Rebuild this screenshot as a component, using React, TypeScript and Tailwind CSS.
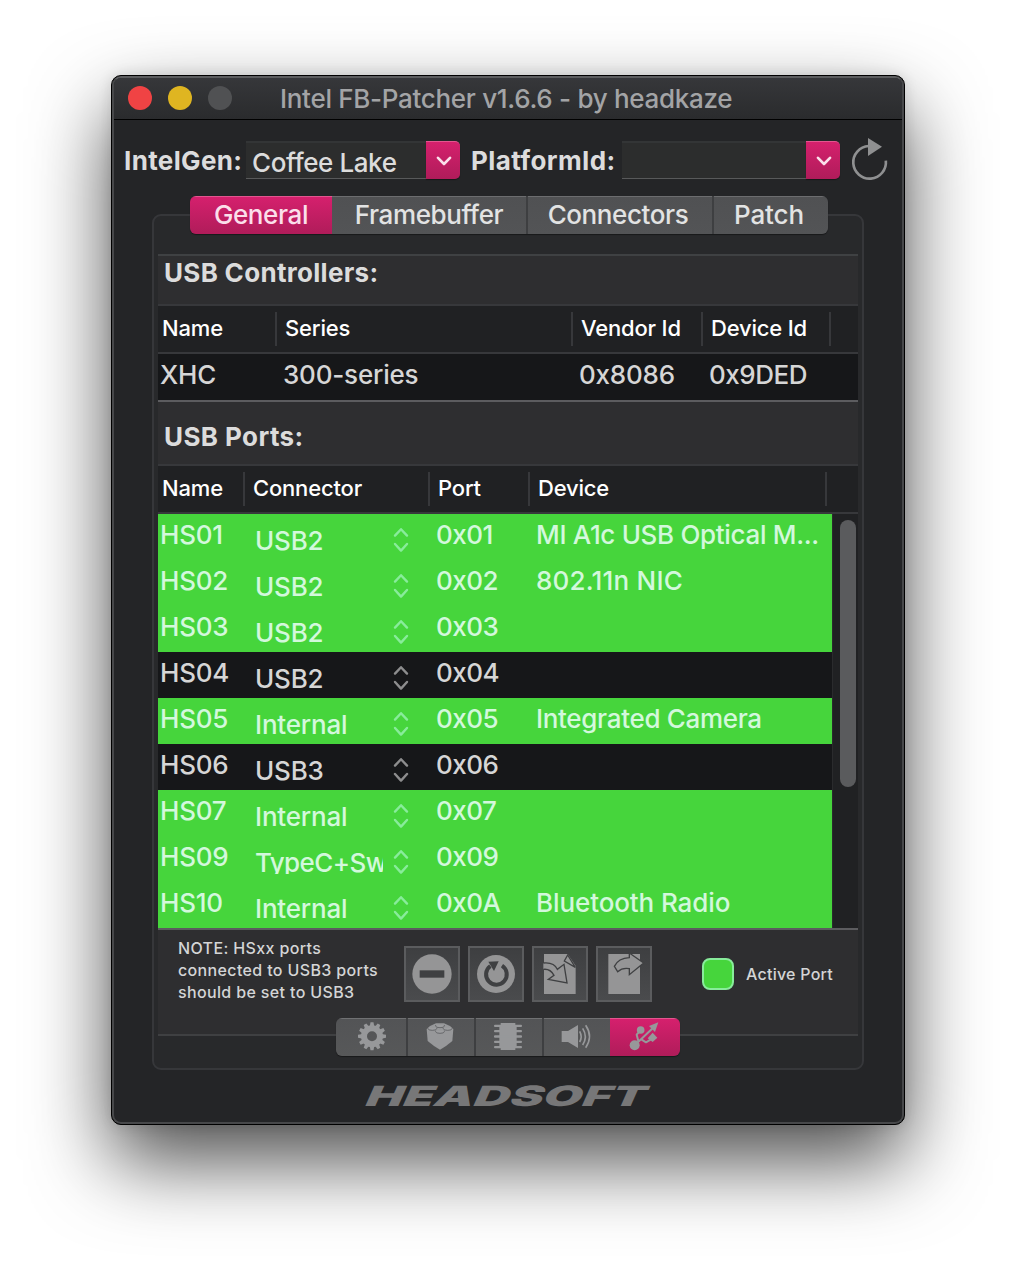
import type { ReactNode } from "react";

const controllers = [{ name: "XHC", series: "300-series", vendor: "0x8086", device: "0x9DED" }];

const ports = [
  { name: "HS01", connector: "USB2", port: "0x01", device: "MI A1c USB Optical M...", active: true },
  { name: "HS02", connector: "USB2", port: "0x02", device: "802.11n NIC", active: true },
  { name: "HS03", connector: "USB2", port: "0x03", device: "", active: true },
  { name: "HS04", connector: "USB2", port: "0x04", device: "", active: false },
  { name: "HS05", connector: "Internal", port: "0x05", device: "Integrated Camera", active: true },
  { name: "HS06", connector: "USB3", port: "0x06", device: "", active: false },
  { name: "HS07", connector: "Internal", port: "0x07", device: "", active: true },
  { name: "HS09", connector: "TypeC+Sw", port: "0x09", device: "", active: true, clipped: true },
  { name: "HS10", connector: "Internal", port: "0x0A", device: "Bluetooth Radio", active: true },
];

function Combo({ value, width }: { value: string; width: string }) {
  return (
    <div className="flex h-[38px]">
      <div
        className={`${width} border-t-2 border-b border-t-[#333536] border-b-[#58595a] bg-[#2c2d2d] pl-1.5 text-[26px] leading-[39px] font-[450] tracking-[-0.4px] text-[#dcdcdc]`}
      >
        {value}
      </div>
      <button className="flex w-[34px] items-center justify-center rounded-r-[5px] border-t border-[#e2568f] bg-gradient-to-b from-[#d5206d] to-[#b01c5a] shadow-[0_1px_1px_rgba(0,0,0,0.4)]">
        <svg width="16" height="10" viewBox="0 0 16 10" fill="none" stroke="#fbdfea" strokeWidth="2.6" strokeLinecap="round" strokeLinejoin="round" className="ml-px">
          <path d="M2 1.8 8 8 14 1.8" />
        </svg>
      </button>
    </div>
  );
}

function HeadCell({ width, children }: { width: string; children?: ReactNode }) {
  return (
    <div className={`flex h-[46px] items-start text-[22px] leading-[44px] font-medium tracking-[-0.18px] text-white ${width}`}>
      <span className="flex-1 whitespace-nowrap">{children}</span>
      <span className="mt-1.5 h-[34px] w-0.5 bg-[#37383b]" />
    </div>
  );
}

function Gear() {
  const teeth = Array.from({ length: 12 }, (_, i) => i * 30);
  return (
    <svg width="40" height="40" viewBox="63 23 120 120">
      <g fill="#97989a">
        {teeth.map((a) => (
          <path key={a} d="M119 50 121.5 36h9L133 50Z" transform={`rotate(${a} 126 78)`} />
        ))}
      </g>
      <circle cx="126" cy="78" r="24" fill="none" stroke="#97989a" strokeWidth="18" />
    </svg>
  );
}

function Brick() {
  return (
    <svg width="40" height="40" viewBox="273 23 120 120">
      <path d="M290 56 300 47 318 39 342 39 360 47 370 56 367 92Q350 107 330 118 310 107 293 92Z" fill="#97989a" />
      <g fill="#9c9d9f" stroke="#5d5e60" strokeWidth="2.5">
        <path d="M317 44v3a13 5 0 0 0 26 0v-3" />
        <path d="M294 52v3a13 5 0 0 0 26 0v-3" />
        <path d="M340 52v3a13 5 0 0 0 26 0v-3" />
        <path d="M317 61v3a13 5 0 0 0 26 0v-3" />
      </g>
    </svg>
  );
}

function Chip() {
  return (
    <svg width="40" height="40" viewBox="477 23 120 120" fill="#97989a">
      <path d="M512 38H556V46L560 50V107L556 111V119H512V111L508 107V50L512 46Z" />
      {[44, 60, 76, 92, 108].map((y) => (
        <rect key={y} x="492" y={y - 1} width="84" height="7" rx="3" />
      ))}
    </svg>
  );
}

function Speaker() {
  return (
    <svg width="40" height="40" viewBox="681 23 120 120" fill="none" stroke="#97989a" strokeWidth="5">
      <path d="M695 62H714L744 44V113L714 95H695Z" fill="#97989a" stroke="none" />
      <path d="M749 63Q758 79 749 95" />
      <path d="M758 54Q774 79 758 104" />
      <path d="M767 45Q790 79 767 112" />
    </svg>
  );
}

function Usb() {
  return (
    <svg width="40" height="40" viewBox="885 23 120 120" fill="none" stroke="#97989a" strokeWidth="6" strokeLinejoin="round">
      <path d="M914 105 972 50" />
      <path d="M930 62 920 73 925 92" />
      <path d="M934 87 948 96 968 84" />
      <g fill="#97989a" stroke="none">
        <path d="M985 36 957 47 975 65Z" />
        <circle cx="914" cy="105" r="15" />
        <circle cx="932" cy="59" r="11.5" />
        <path d="M968 67 982 82 968 95 953 84Z" />
      </g>
    </svg>
  );
}

function ToolButton({ children }: { children: ReactNode }) {
  return (
    <button className="h-14 w-14 border-2 border-[#5b5c5e] bg-gradient-to-b from-[#3e3f41] to-[#4a4b4d]">{children}</button>
  );
}

function Stepper({ active }: { active: boolean }) {
  return (
    <svg width="16" height="26" viewBox="0 0 16 26" fill="none" stroke={active ? "#88ec9b" : "#8d8d8e"} strokeWidth="2.4" strokeLinecap="round" strokeLinejoin="round" className="mt-[13px]">
      <path d="M2 8.6 8 2.2 14 8.6M2 17 8 23.6 14 17" />
    </svg>
  );
}

function Segment({ width, children }: { width: string; children: ReactNode }) {
  return (
    <button className={`flex items-center justify-center border-t border-[#707173] bg-gradient-to-b from-[#535456] to-[#575859] ${width}`}>
      {children}
    </button>
  );
}

const tab = "border-t border-[#6c6d6f] bg-gradient-to-b from-[#505153] to-[#535456] text-[#e2e3e3]";
const divider = "w-0.5 bg-[#3e3f41]";

export default function App() {
  return (
    <div className="h-[1272px] w-[1016px] overflow-hidden bg-white pt-[75px] pl-[111px] font-['Inter',sans-serif]">
      <div className="h-[1050px] w-[794px] rounded-[10px] border border-black bg-black shadow-[0_36px_80px_rgba(0,0,0,0.70),0_0_14px_rgba(0,0,0,0.12)]">
        <div className="h-[1048px] w-[792px] overflow-hidden rounded-[9px] border-2 border-[#47484a] border-t-[#5c5d5f] bg-[#242527]">
          <header className="flex h-[42px] items-start border-b border-black bg-gradient-to-b from-[#36373a] to-[#2a2b2d] pl-3.5">
            <div className="mt-2 flex gap-4">
              <span className="h-6 w-6 rounded-full bg-[#f04344]" />
              <span className="h-6 w-6 rounded-full bg-[#dfb521]" />
              <span className="h-6 w-6 rounded-full bg-[#505153]" />
            </div>
            <h1 className="ml-12 text-[26px] leading-[41px] font-[450] tracking-[-0.3px] whitespace-nowrap text-[#a3a4a6]">
              Intel FB-Patcher v1.6.6 - by headkaze
            </h1>
          </header>

          <div className="flex h-[59px] items-start pt-[21px] text-[26px] leading-[39px]">
            <span className="w-[132px] pl-2.5 font-bold tracking-[0.35px] text-[#dcdcdd]">IntelGen:</span>
            <Combo value="Coffee Lake" width="w-[180px]" />
            <span className="w-[162px] pl-[11px] font-bold tracking-[0.4px] text-[#dcdcdd]">PlatformId:</span>
            <Combo value="" width="w-[184px]" />
            <svg width="40" height="46" viewBox="1050 216 120 138" className="-mt-[5px] ml-2.5">
              <path d="M1157.5 290A49 49 0 1 1 1106 246" fill="none" stroke="#8f9091" strokeWidth="8" />
              <path d="M1104 222 1146 248 1104 276Z" fill="#8f9091" />
            </svg>
          </div>

          <nav className="relative z-10 mt-[17px] ml-[76px] flex h-[38px] w-[638px] overflow-hidden rounded-[6px] text-[26px] leading-[34px] font-[450] tracking-[-0.4px] shadow-[0_1px_1px_rgba(0,0,0,0.4)]">
            <button className="w-[142px] border-t border-[#e2568f] bg-gradient-to-b from-[#d5206d] to-[#b01c5a] pb-0.5 text-[#fbdfea]">General</button>
            <button className={`w-[194px] pb-0.5 ${tab}`}>Framebuffer</button>
            <span className={divider} />
            <button className={`w-[184px] pr-1 pb-0.5 ${tab}`}>Connectors</button>
            <span className={divider} />
            <button className={`w-[114px] pr-1 pb-0.5 tracking-[-0.1px] ${tab}`}>Patch</button>
          </nav>

          <main className="-mt-5 ml-[38px] h-[856px] w-[712px] rounded-[9px] border-2 border-[#36373a] bg-[#28292b] px-1 pt-[38px]">
            <section className="h-[782px] border-t-2 border-b-2 border-t-[#3f4143] border-b-[#3f4042] bg-[#2e2e30]">
              <h2 className="h-12 pl-1.5 text-[26px] leading-[33px] font-bold tracking-[0.3px] text-[#dcdcdc]">USB Controllers:</h2>
              <div className="flex h-[50px] border-y-2 border-[#37383b] bg-[#202123] pl-1">
                <HeadCell width="w-[115px]">Name</HeadCell>
                <HeadCell width="w-[296px] pl-2">Series</HeadCell>
                <HeadCell width="w-[130px] pl-2">Vendor Id</HeadCell>
                <HeadCell width="w-[128px] pl-2">Device Id</HeadCell>
              </div>
              {controllers.map((c) => (
                <div key={c.name} className="flex h-12 border-b-2 border-[#5c5c5f] bg-[#161719] pl-0.5 text-[26px] leading-[41px] font-[450] tracking-[-0.2px] text-[#d6d6d6]">
                  <span className="w-[123px]">{c.name}</span>
                  <span className="w-[296px]">{c.series}</span>
                  <span className="w-[130px]">{c.vendor}</span>
                  <span className="tracking-[-0.45px]">{c.device}</span>
                </div>
              ))}

              <h2 className="h-[62px] pl-1.5 text-[26px] leading-[70px] font-bold tracking-[0.4px] text-[#dcdcdc]">USB Ports:</h2>
              <div className="flex h-[50px] border-y-2 border-[#37383b] bg-[#202123] pl-1">
                <HeadCell width="w-[83px]">Name</HeadCell>
                <HeadCell width="w-[185px] pl-2">Connector</HeadCell>
                <HeadCell width="w-[100px] pl-2">Port</HeadCell>
                <HeadCell width="w-[297px] pl-2">Device</HeadCell>
              </div>
              <div className="flex h-[416px] border-b-2 border-[#5c5c5f] bg-[#202123]">
                <div className="w-[674px]">
                  {ports.map((p) => (
                    <div
                      key={p.name}
                      className={`flex h-[46px] items-start pl-0.5 text-[26px] leading-[41px] font-[450] tracking-[-0.2px] whitespace-nowrap ${p.active ? "bg-[#46d53c] text-[#d3f8dc]" : "bg-[#161719] text-[#d6d6d6]"}`}
                    >
                      <span className="w-[95px]">{p.name}</span>
                      <span className={`mt-2 w-[128px] leading-[37px] ${p.clipped ? "h-[30px] overflow-hidden tracking-[-0.6px]" : ""}`}>
                        {p.connector}
                      </span>
                      <span className="w-[53px] pl-[10px]">
                        <Stepper active={p.active} />
                      </span>
                      <span className="w-[100px] tracking-[-0.55px]">{p.port}</span>
                      <span className={p.device.startsWith("802") ? "tracking-[0.2px]" : p.device.startsWith("Blue") ? "tracking-[-0.1px]" : "tracking-[-0.32px]"}>
                        {p.device}
                      </span>
                    </div>
                  ))}
                </div>
                <div className="w-[26px] border-l border-[#2a2b2d] pt-1.5 pl-[7px]">
                  <div className="h-[267px] w-4 rounded-full bg-[#5a5b5d]" />
                </div>
              </div>

              <footer className="flex h-[104px] items-start text-[#d4d5d6]">
                <p className="mt-[7px] w-[246px] pl-5 text-[16px] leading-[22px] font-medium tracking-[0.36px]">
                  NOTE: HSxx ports
                  <br />
                  connected to USB3 ports
                  <br />
                  should be set to USB3
                </p>
                <div className="mt-4 flex gap-2">
                  <ToolButton>
                    <svg width="52" height="52" viewBox="33 39 156 156">
                      <circle cx="111" cy="117" r="59" fill="#959596" />
                      <rect x="74" y="106" width="74" height="22" fill="#3f4042" />
                    </svg>
                  </ToolButton>
                  <ToolButton>
                    <svg width="52" height="52" viewBox="225 39 156 156">
                      <circle cx="303" cy="117" r="57" fill="#959596" />
                      <path d="M321 92A31 31 0 1 1 286 93" fill="none" stroke="#3f4042" strokeWidth="12" />
                      <path d="M280 80 311 79 297 108Z" fill="#3f4042" />
                    </svg>
                  </ToolButton>
                  <ToolButton>
                    <svg width="52" height="52" viewBox="417 39 156 156">
                      <path d="M447 57H518L542 93V177H447Z" fill="#959596" />
                      <path d="M518 60 508 78 541 97Z" fill="#959596" stroke="#3f4042" strokeWidth="4" />
                      <path d="M445 84C465 82 481 89 487 103L507 88 516 144 460 133 477 121C470 108 460 101 445 103" fill="#959596" stroke="#3f4042" strokeWidth="4" />
                    </svg>
                  </ToolButton>
                  <ToolButton>
                    <svg width="52" height="52" viewBox="609 39 156 156">
                      <path d="M640 57H735V177H640Z" fill="#959596" />
                      <path d="M703 54 746 84 703 119V101C688 98 676 103 668 110L658 94C666 78 682 69 703 68Z" fill="#959596" stroke="#3f4042" strokeWidth="4" />
                    </svg>
                  </ToolButton>
                </div>
                <span className="mt-7 ml-[50px] h-8 w-8 rounded-[8px] border-2 border-[#88ec9b] bg-[#46d53c]" />
                <span className="mt-7 ml-3 text-[16px] leading-8 font-medium tracking-[0.25px]">Active Port</span>
              </footer>
            </section>

            <div className="relative -mt-[18px] ml-[178px] flex h-[38px] w-[344px] overflow-hidden rounded-[6px] shadow-[0_1px_1px_rgba(0,0,0,0.4)]">
              <Segment width="w-[70px]"><Gear /></Segment>
              <span className={divider} />
              <Segment width="w-[66px]"><Brick /></Segment>
              <span className={divider} />
              <Segment width="w-[66px]"><Chip /></Segment>
              <span className={divider} />
              <Segment width="w-[66px]"><Speaker /></Segment>
              <button className="flex w-[70px] items-center justify-center border-t border-[#e2568f] bg-gradient-to-b from-[#d5206d] to-[#b01c5a]">
                <Usb />
              </button>
            </div>
          </main>

          <svg width="300" height="32" viewBox="0 0 300 32" className="mt-2.5 ml-[244px]" aria-label="Headsoft">
            <text x="5" y="26" transform="translate(11.6 0) skewX(-24)" fontSize="28" fontWeight="900" textLength="280" lengthAdjust="spacingAndGlyphs" fill="#777778">
              HEADSOFT
            </text>
          </svg>
        </div>
      </div>
    </div>
  );
}
